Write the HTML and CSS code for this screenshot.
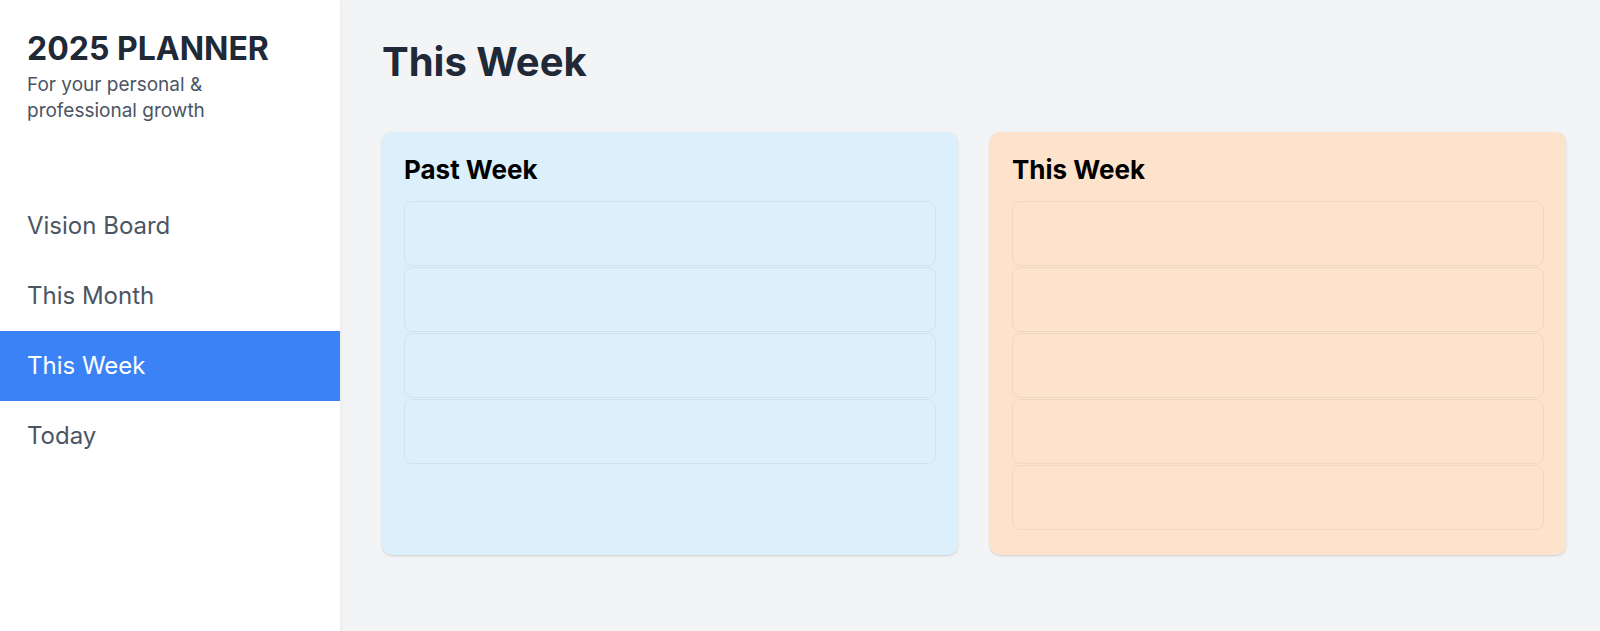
FILE: index.html
```html
<!DOCTYPE html>
<html lang="en">
<head>
    <meta charset="UTF-8">
    <meta name="viewport" content="width=device-width, initial-scale=1.0">
    <title>2025 Planner</title>
    <link rel="stylesheet" href="styles.css">
</head>
<body>
    <aside class="sidebar">
        <div class="brand">
            <h1>2025 PLANNER</h1>
            <p>For your personal &amp; professional growth</p>
        </div>
        <nav class="nav">
            <a href="#" class="nav-item">Vision Board</a>
            <a href="#" class="nav-item">This Month</a>
            <a href="#" class="nav-item active">This Week</a>
            <a href="#" class="nav-item">Today</a>
        </nav>
    </aside>
    <main class="main">
        <h2 class="page-title">This Week</h2>
        <div class="cards">
            <section class="card card-past">
                <h3>Past Week</h3>
                <div class="slots">
                    <div class="slot"></div>
                    <div class="slot"></div>
                    <div class="slot"></div>
                    <div class="slot"></div>
                </div>
            </section>
            <section class="card card-this">
                <h3>This Week</h3>
                <div class="slots">
                    <div class="slot"></div>
                    <div class="slot"></div>
                    <div class="slot"></div>
                    <div class="slot"></div>
                    <div class="slot"></div>
                </div>
            </section>
        </div>
    </main>
</body>
</html>
```

FILE: styles.css
```css
:root {
    --text-dark: #1f2937;
    --text-muted: #4b5563;
    --page-bg: #f3f4f6;
    --accent: #3b82f6;
    --past-bg: #dbf0fa;
    --this-bg: #fde3cb;
}
* {
    box-sizing: border-box;
}
body {
    margin: 0;
    height: 100vh;
    display: flex;
    font-family: Inter, "Noto Sans", Arial, sans-serif;
    background-color: var(--page-bg);
    color: var(--text-dark);
}
.sidebar {
    width: 340px;
    flex-shrink: 0;
    background: #fff;
    box-shadow: 1px 0 4px rgba(0, 0, 0, 0.05);
}
.brand {
    padding: 30px 27px 0;
}
.brand h1 {
    margin: 0;
    font-size: 32px;
    line-height: 1.2;
    font-weight: 700;
    color: var(--text-dark);
}
.brand p {
    margin: 4px 0 0;
    font-size: 19px;
    line-height: 26px;
    color: var(--text-muted);
    width: 210px;
}
.nav {
    margin-top: 67px;
    display: flex;
    flex-direction: column;
}
.nav-item {
    display: block;
    height: 70px;
    line-height: 70px;
    padding: 0 27px;
    font-size: 24px;
    color: var(--text-muted);
    text-decoration: none;
}
.nav-item.active {
    background-color: var(--accent);
    color: #fff;
}
.main {
    flex: 1;
    padding: 38px 34px 0 42px;
}
.page-title {
    margin: 0 0 46px;
    font-size: 40px;
    line-height: 48px;
    font-weight: 700;
    color: var(--text-dark);
}
.cards {
    display: grid;
    grid-template-columns: 1fr 1fr;
    gap: 32px;
}
.card {
    padding: 21px 22px 25px;
    border-radius: 10px;
    box-shadow: 0 1px 3px rgba(0, 0, 0, 0.1), 0 1px 2px rgba(0, 0, 0, 0.06);
}
.card-past {
    background-color: var(--past-bg);
}
.card-this {
    background-color: var(--this-bg);
}
.card h3 {
    margin: 0 0 14px;
    font-size: 26px;
    line-height: 34px;
    font-weight: 700;
    color: #000;
}
.slots {
    display: flex;
    flex-direction: column;
    gap: 1px;
}
.slot {
    height: 65px;
    border: 1px solid rgba(0, 0, 0, 0.05);
    border-radius: 8px;
}
```
